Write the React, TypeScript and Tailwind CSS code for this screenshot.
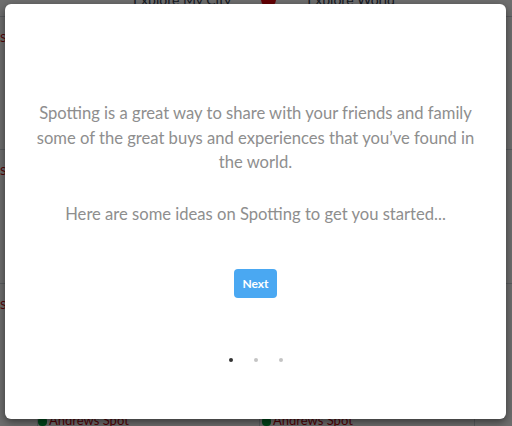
import React from 'react';

export default function App() {
  return (
    <div className="relative w-[512px] h-[426px] overflow-hidden bg-white font-['Lato',sans-serif]">
      {/* page behind the modal */}
      <div className="flex flex-col w-full h-full">
        <div className="flex items-center h-[16px] -mt-[9px] text-[14px] text-gray-700 whitespace-nowrap">
          <span className="ml-[133px]">Explore My City</span>
          <span className="ml-[30px] w-[15px] h-[15px] rounded-full bg-red-600" />
          <span className="ml-[31px]">Explore World</span>
        </div>
        <div className="grid grid-cols-2 flex-1 mx-[-12px] mt-[9px]">
          {[0, 1, 2, 3, 4, 5].map(i => (
            <div key={i} className="border-t border-r border-gray-300 h-[130px] px-3 pt-[12px] text-[12px] text-red-700">
              {i % 2 === 0 ? 'Spot' : ''}
            </div>
          ))}
        </div>
        <div className="flex h-[10px]">
          <div className="w-[223px] ml-[37px] border-l border-r border-gray-300 flex items-center gap-[2px] text-[13px] text-red-700">
            <span className="w-[9px] h-[9px] bg-green-600 rounded-sm" />
            Andrews Spot
          </div>
          <div className="w-[215px] border-r border-gray-300 flex items-center gap-[2px] pl-[2px] text-[13px] text-red-700">
            <span className="w-[9px] h-[9px] bg-green-600 rounded-sm" />
            Andrews Spot
          </div>
        </div>
      </div>

      {/* dim overlay */}
      <div className="absolute inset-0 bg-black/[0.57]" />

      {/* modal */}
      <div className="absolute left-[5px] top-[4px] w-[501px] h-[415px] bg-white rounded-[6px] shadow-[0_3px_9px_rgba(0,0,0,0.5)] flex flex-col items-center pt-[97px]">
        <p className="text-center text-[16.6px] leading-[24.5px] text-[#8e8e8e] px-[28px]">
          Spotting is a great way to share with your friends and family some of the great buys and experiences that you’ve found in the world.
        </p>
        <p className="mt-[27px] text-center text-[16.6px] leading-[24.5px] text-[#8e8e8e]">
          Here are some ideas on Spotting to get you started...
        </p>
        <button className="mt-[43px] w-[43px] h-[29px] rounded-[4px] bg-[#4aa8f2] text-white text-[12px] font-bold">
          Next
        </button>
        <div className="mt-[60px] flex gap-[21px]">
          <span className="w-[4px] h-[4px] rounded-full bg-[#333]" />
          <span className="w-[4px] h-[4px] rounded-full bg-[#c4c4c4]" />
          <span className="w-[4px] h-[4px] rounded-full bg-[#c4c4c4]" />
        </div>
      </div>
    </div>
  );
}
